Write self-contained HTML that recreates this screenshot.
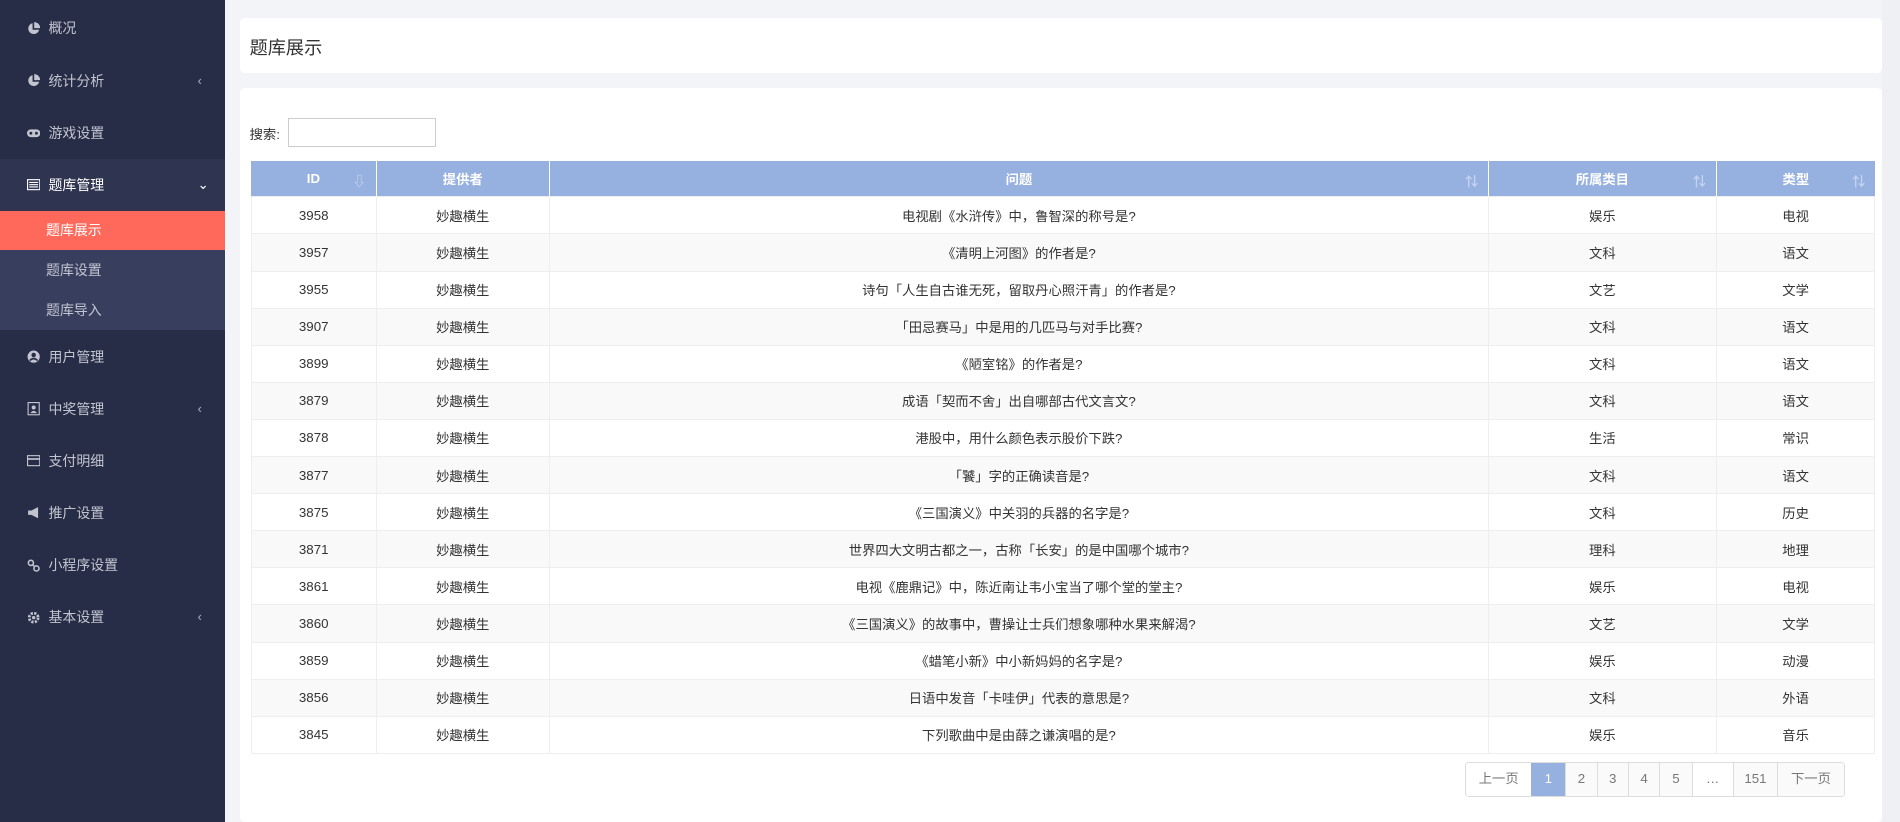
<!DOCTYPE html>
<html><head><meta charset="utf-8"><style>
html,body{margin:0;padding:0;overflow:hidden;}
body{width:1568px;height:678px;zoom:1.21173;background:#f3f4f7;font-family:"Liberation Sans","Noto Sans CJK SC",sans-serif;position:relative;overflow:hidden;color:#333;}
.side{position:absolute;left:0;top:0;width:186px;height:678px;background:#282d47;}
.mi{position:absolute;left:0;width:186px;height:43px;line-height:43px;color:#c2c5d0;font-size:11.5px;}
.mi .ic{position:absolute;left:22px;top:16px;width:11px;height:11px;}
.mi .t{position:absolute;left:40px;}
.mi .ar{position:absolute;left:163px;font-size:11px;color:#a8adbd;}
.sub{position:absolute;left:0;width:186px;height:33px;line-height:33px;font-size:11.5px;color:#c2c5d0;}
.sub span{position:absolute;left:38px;}
.card{position:absolute;left:198px;width:1355px;background:#fff;border-radius:4px;}
table{position:absolute;left:207px;top:133px;width:1340px;border-collapse:collapse;font-size:11px;table-layout:fixed;}
th{background:#96b0e0;color:#fff;height:29px;font-weight:bold;border-right:1px solid #fff;position:relative;padding:0}
th:last-child{border-right:none}
th i{position:absolute;right:8px;top:8px;color:#c5d3ee;font-style:normal;font-size:11px;}
td{height:29.8px;text-align:center;border:1px solid #eee;color:#333;padding:0;vertical-align:middle}
tr:nth-child(odd) td{background:#f9f9f9}
.pg{position:absolute;top:629px;height:27px;display:flex;left:1209px;border:1px solid #ddd;border-radius:3px;overflow:hidden;}
.pg div{height:27px;line-height:27px;text-align:center;font-size:11px;color:#777;border-left:1px solid #ddd;background:#fafafa}
.pg div:first-child{border-left:none;background:#fff}
.pg .a{background:#96b0e0;color:#fff;border-left:none}
</style></head><body>
<div class="side">
 <div class="mi" style="top:2px"><svg class="ic" viewBox="0 0 12 12"><path d="M5 1A5 5 0 1 0 11 7H5Z" fill="#c2c5d0"/><path d="M6.5 0V5.5H12A6 6 0 0 0 6.5 0Z" fill="#c2c5d0"/></svg><span class="t">概况</span></div>
 <div class="mi" style="top:45px"><svg class="ic" viewBox="0 0 12 12"><path d="M5 1A5 5 0 1 0 11 7H5Z" fill="#c2c5d0"/><path d="M6.5 0V5.5H12A6 6 0 0 0 6.5 0Z" fill="#c2c5d0"/></svg><span class="t">统计分析</span><span class="ar">‹</span></div>
 <div class="mi" style="top:88px"><svg class="ic" viewBox="0 0 12 12"><rect x="0" y="3" width="12" height="7" rx="3.5" fill="#c2c5d0"/><circle cx="3.5" cy="6.5" r="1.3" fill="#282d47"/><circle cx="8.5" cy="6.5" r="1.3" fill="#282d47"/></svg><span class="t">游戏设置</span></div>
 <div class="mi" style="top:131px;background:#2f3450;color:#fff"><svg class="ic" viewBox="0 0 12 12"><rect x="0.5" y="1.5" width="11" height="9" fill="none" stroke="#fff"/><path d="M2 4h8M2 6h8M2 8h8" stroke="#fff"/></svg><span class="t">题库管理</span><span class="ar" style="color:#fff">⌄</span></div>
 <div style="position:absolute;top:174px;left:0;width:186px;height:98px;background:#383f5e"></div>
 <div class="sub" style="top:174px;height:32px;line-height:32px;background:#ff695c;color:#fff"><span>题库展示</span></div>
 <div class="sub" style="top:207px"><span>题库设置</span></div>
 <div class="sub" style="top:240px"><span>题库导入</span></div>
 <div class="mi" style="top:273px"><svg class="ic" viewBox="0 0 12 12"><circle cx="6" cy="6" r="5.5" fill="#c2c5d0"/><circle cx="6" cy="4.5" r="2" fill="#282d47"/><path d="M2.5 9.5Q6 6 9.5 9.5" stroke="#282d47" fill="none" stroke-width="1.5"/></svg><span class="t">用户管理</span></div>
 <div class="mi" style="top:316px"><svg class="ic" viewBox="0 0 12 12"><rect x="1" y="0.5" width="10" height="11" fill="none" stroke="#c2c5d0"/><circle cx="6" cy="5" r="1.8" fill="#c2c5d0"/><path d="M3 10Q6 6 9 10Z" fill="#c2c5d0"/></svg><span class="t">中奖管理</span><span class="ar">‹</span></div>
 <div class="mi" style="top:359px"><svg class="ic" viewBox="0 0 12 12"><rect x="0.5" y="1.5" width="11" height="9" fill="none" stroke="#c2c5d0"/><path d="M0.5 4.5h11" stroke="#c2c5d0" stroke-width="1.5"/></svg><span class="t">支付明细</span></div>
 <div class="mi" style="top:402px"><svg class="ic" viewBox="0 0 12 12"><path d="M1 4h3l6-3v10L4 8H1Z" fill="#c2c5d0"/></svg><span class="t">推广设置</span></div>
 <div class="mi" style="top:445px"><svg class="ic" viewBox="0 0 12 12"><circle cx="3.5" cy="3.5" r="2.3" fill="none" stroke="#c2c5d0" stroke-width="1.4"/><circle cx="8.5" cy="8.5" r="2.3" fill="none" stroke="#c2c5d0" stroke-width="1.4"/><path d="M5 5l2 2" stroke="#c2c5d0" stroke-width="1.4"/></svg><span class="t">小程序设置</span></div>
 <div class="mi" style="top:488px"><svg class="ic" viewBox="0 0 12 12"><circle cx="6" cy="6" r="4" fill="none" stroke="#c2c5d0" stroke-width="2.5" stroke-dasharray="2 1.2"/><circle cx="6" cy="6" r="1.5" fill="#c2c5d0"/></svg><span class="t">基本设置</span><span class="ar">‹</span></div>
</div>
<div style="position:absolute;left:1553px;top:0;width:15px;height:678px;background:#eef0f3"></div>
<div class="card" style="top:15px;height:45px"><span style="position:absolute;left:8px;top:13px;font-size:15px;color:#333">题库展示</span></div>
<div class="card" style="top:73px;height:605px"></div>
<span style="position:absolute;left:206px;top:102px;font-size:11px">搜索:</span>
<div style="position:absolute;left:238px;top:97px;width:120px;height:23px;border:1px solid #ccc;background:#fff"></div>
<table>
<colgroup><col style="width:103px"><col style="width:143px"><col style="width:775px"><col style="width:188px"><col style="width:131px"></colgroup>
<tr><th>ID<i>⇩</i></th><th>提供者</th><th>问题<i>⇅</i></th><th>所属类目<i>⇅</i></th><th>类型<i>⇅</i></th></tr>
<tr><td>3958</td><td>妙趣横生</td><td>电视剧《水浒传》中，鲁智深的称号是?</td><td>娱乐</td><td>电视</td></tr>
<tr><td>3957</td><td>妙趣横生</td><td>《清明上河图》的作者是?</td><td>文科</td><td>语文</td></tr>
<tr><td>3955</td><td>妙趣横生</td><td>诗句「人生自古谁无死，留取丹心照汗青」的作者是?</td><td>文艺</td><td>文学</td></tr>
<tr><td>3907</td><td>妙趣横生</td><td>「田忌赛马」中是用的几匹马与对手比赛?</td><td>文科</td><td>语文</td></tr>
<tr><td>3899</td><td>妙趣横生</td><td>《陋室铭》的作者是?</td><td>文科</td><td>语文</td></tr>
<tr><td>3879</td><td>妙趣横生</td><td>成语「契而不舍」出自哪部古代文言文?</td><td>文科</td><td>语文</td></tr>
<tr><td>3878</td><td>妙趣横生</td><td>港股中，用什么颜色表示股价下跌?</td><td>生活</td><td>常识</td></tr>
<tr><td>3877</td><td>妙趣横生</td><td>「饕」字的正确读音是?</td><td>文科</td><td>语文</td></tr>
<tr><td>3875</td><td>妙趣横生</td><td>《三国演义》中关羽的兵器的名字是?</td><td>文科</td><td>历史</td></tr>
<tr><td>3871</td><td>妙趣横生</td><td>世界四大文明古都之一，古称「长安」的是中国哪个城市?</td><td>理科</td><td>地理</td></tr>
<tr><td>3861</td><td>妙趣横生</td><td>电视《鹿鼎记》中，陈近南让韦小宝当了哪个堂的堂主?</td><td>娱乐</td><td>电视</td></tr>
<tr><td>3860</td><td>妙趣横生</td><td>《三国演义》的故事中，曹操让士兵们想象哪种水果来解渴?</td><td>文艺</td><td>文学</td></tr>
<tr><td>3859</td><td>妙趣横生</td><td>《蜡笔小新》中小新妈妈的名字是?</td><td>娱乐</td><td>动漫</td></tr>
<tr><td>3856</td><td>妙趣横生</td><td>日语中发音「卡哇伊」代表的意思是?</td><td>文科</td><td>外语</td></tr>
<tr><td>3845</td><td>妙趣横生</td><td>下列歌曲中是由薛之谦演唱的是?</td><td>娱乐</td><td>音乐</td></tr>
</table>
<div class="pg"><div style="width:54px">上一页</div><div class="a" style="width:28px">1</div><div style="width:25px">2</div><div style="width:25px">3</div><div style="width:25px">4</div><div style="width:26px">5</div><div style="width:33px;background:#fff">…</div><div style="width:36px">151</div><div style="width:54px">下一页</div></div>
</body></html>
